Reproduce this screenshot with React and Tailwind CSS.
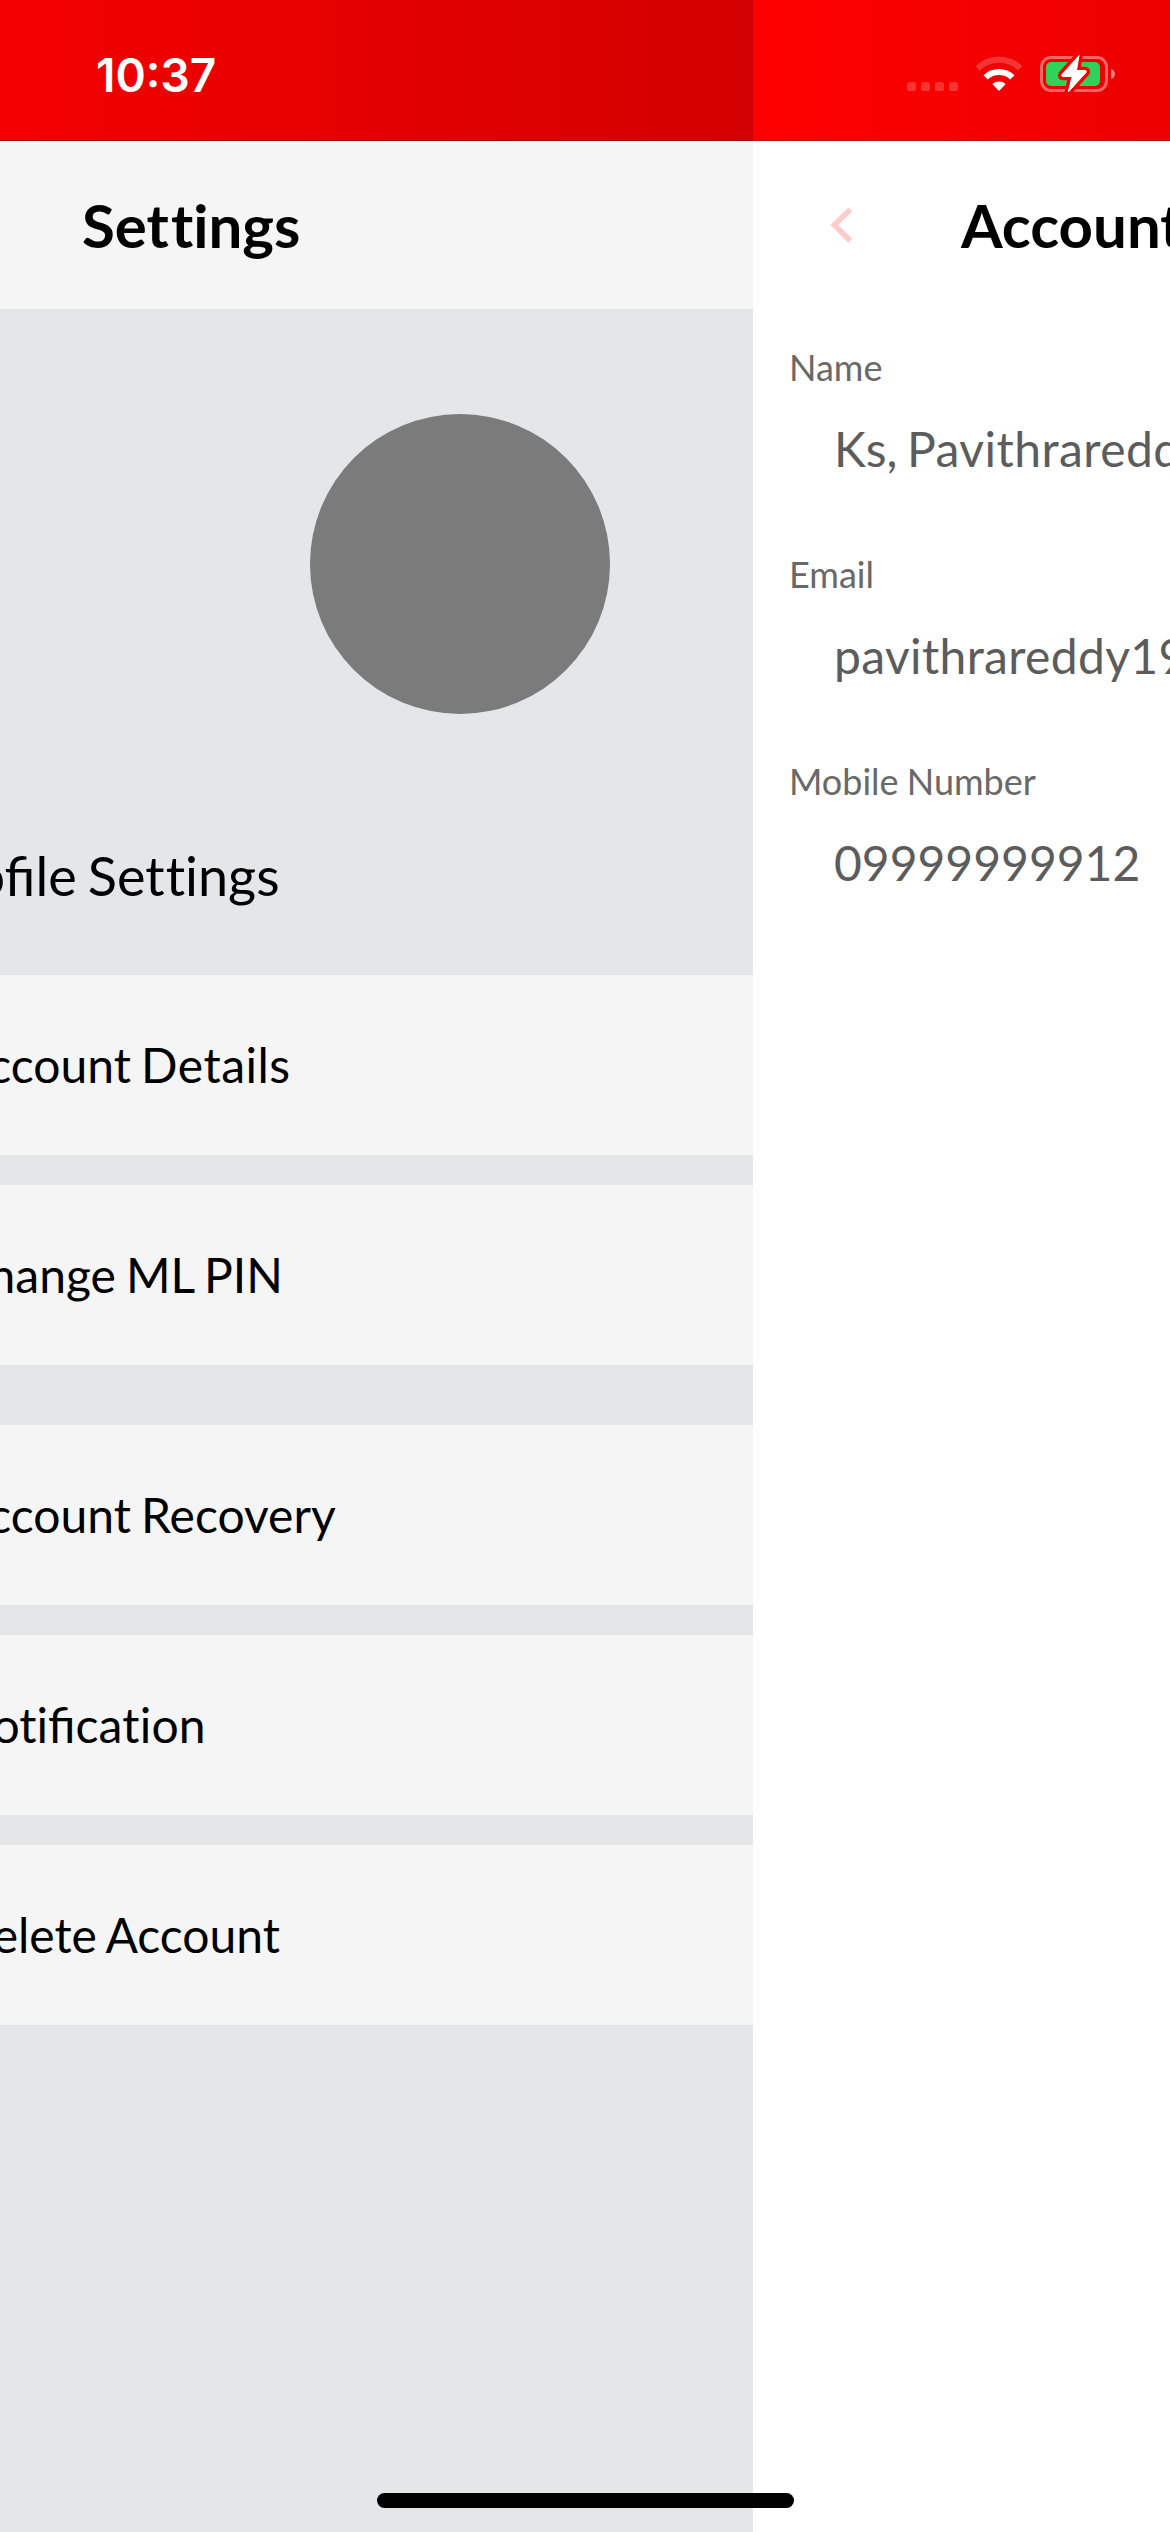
function Row({ className, children }) {
  return (
    <div className={`flex h-[180px] shrink-0 items-center bg-[#f5f5f5] text-[48px] whitespace-nowrap ${className ?? ""}`}>
      <div className="-ml-[43.5px] [word-spacing:-0.045em]">{children}</div>
    </div>
  );
}

function Plain({ className, children }) {
  return <span className={`[font-variant-ligatures:none] ${className ?? ""}`}>{children}</span>;
}

function Field({ label, value }) {
  return (
    <div className="h-[207px] whitespace-nowrap">
      <div className="h-[50px] text-[36px] leading-[50px] text-[#696969] [word-spacing:-0.03em]">{label}</div>
      <div className="mt-[24px] ml-[45px] h-[66px] text-[48px] leading-[66px] text-[#5c5c5c]">{value}</div>
    </div>
  );
}

const BOLT =
  "M1079 55.5 L1062 74.5 Q1061 76.5 1063 76.5 L1072 76.5 L1068.3 92 L1086 72.5 Q1087 70.5 1085 70.5 L1076.5 70.5 Z";

function StatusBar() {
  return (
    <div className="absolute inset-x-0 top-0 flex h-[141px] items-center justify-between pr-[53px] pl-[96px]">
      <div className="mt-[9px] font-['Inter',sans-serif] text-[46px] leading-[56px] font-semibold text-white">10:37</div>
      <svg className="mt-[7px] h-[48px] w-[212px]" viewBox="905 50 212 48" fill="none">
        <g fill="#fff" fillOpacity="0.2">
          <rect x="907" y="82" width="9" height="9" rx="2.6" />
          <rect x="921" y="82" width="9" height="9" rx="2.6" />
          <rect x="935" y="82" width="9" height="9" rx="2.6" />
          <rect x="949" y="82" width="9" height="9" rx="2.6" />
        </g>
        <path d="M975.5 66.2 A33.5 33.5 0 0 1 1022.5 66.2 L1018.2 70.6 A27.3 27.3 0 0 0 979.8 70.6 Z" fill="#fff" fillOpacity="0.2" />
        <path d="M983.5 75.2 A22.5 22.5 0 0 1 1014.5 75.2 L1010.2 79.4 A16.3 16.3 0 0 0 987.8 79.4 Z" fill="#fff" />
        <path d="M992.3 84 A10.5 10.5 0 0 1 1005.7 84 L999 91 Z" fill="#fff" />
        <rect x="1041.5" y="57.5" width="65" height="33" rx="9.5" stroke="#fff" strokeOpacity="0.4" strokeWidth="3" />
        <path d="M1111 69 C1116.3 70.5 1116.3 77.5 1111 79 Z" fill="#fff" fillOpacity="0.5" />
        <rect x="1046" y="62" width="54" height="24" rx="5" fill="#30d158" />
        <path d={BOLT} stroke="#f00000" strokeWidth="7.5" strokeLinejoin="round" />
        <path d={BOLT} fill="#fff" stroke="#fff" strokeWidth="1" strokeLinejoin="round" />
      </svg>
    </div>
  );
}

export default function App() {
  return (
    <div className="relative flex h-[2532px] w-[1170px] overflow-hidden font-['Lato',sans-serif] text-black">
      <div className="flex w-[753px] shrink-0 flex-col overflow-hidden bg-[#e5e6e8]">
        <div className="h-[141px] shrink-0 border-b border-[#a01414] bg-linear-to-r from-[#f40000] to-[#d30000]" />
        <div className="flex h-[168px] shrink-0 items-center bg-[#f5f5f5] pl-[82px] text-[60px] font-bold">
          <div>
            <Plain>Set</Plain>
            <Plain className="ml-[2px]">tings</Plain>
          </div>
        </div>
        <div className="mt-[105px] ml-[310px] size-[300px] shrink-0 rounded-full bg-[#7b7b7b]" />
        <div className="mt-[124px] mb-[61px] -ml-[76px] h-[76px] shrink-0 text-[54px] leading-[76px] whitespace-nowrap [word-spacing:-0.05em]">
          Profile <Plain>Set</Plain>
          <Plain className="ml-[1px]">tings</Plain>
        </div>
        <Row>
          Account <span className="tracking-[0.5px]">Details</span>
        </Row>
        <Row className="mt-[30px]">Change ML PIN</Row>
        <Row className="mt-[60px]">Account Recovery</Row>
        <Row className="mt-[30px]">
          <Plain>Noti</Plain>fi<Plain className="tracking-[0.2px]">cation</Plain>
        </Row>
        <Row className="mt-[30px]">Delete Account</Row>
      </div>
      <div className="w-[417px] overflow-hidden bg-white">
        <div className="h-[141px] border-b border-[#b81616] bg-linear-to-r from-[#ff0000] to-[#ec0000]" />
        <div className="flex h-[168px] items-center pl-[77px] text-[60px] font-bold whitespace-nowrap">
          <svg className="h-[36px] w-[24px] shrink-0" viewBox="0 0 24 36" fill="none">
            <path d="M20.3 2.5 4.3 18 20.3 33.7" stroke="#ffcccc" strokeWidth="5.5" />
          </svg>
          <span className="ml-[107px]">Account Details</span>
        </div>
        <div className="mt-[33px] ml-[36px]">
          <Field
            label="Name"
            value={
              <>
                Ks,<span className="-ml-[3px] tracking-[0.45px]"> Pavithrareddy</span>
              </>
            }
          />
          <Field label="Email" value={<span className="tracking-[0.35px]">pavithrareddy1998</span>} />
          <Field label="Mobile Number" value="09999999912" />
        </div>
      </div>
      <StatusBar />
      <div className="absolute bottom-[24px] left-[377px] h-[15px] w-[417px] rounded-full bg-black" />
    </div>
  );
}
